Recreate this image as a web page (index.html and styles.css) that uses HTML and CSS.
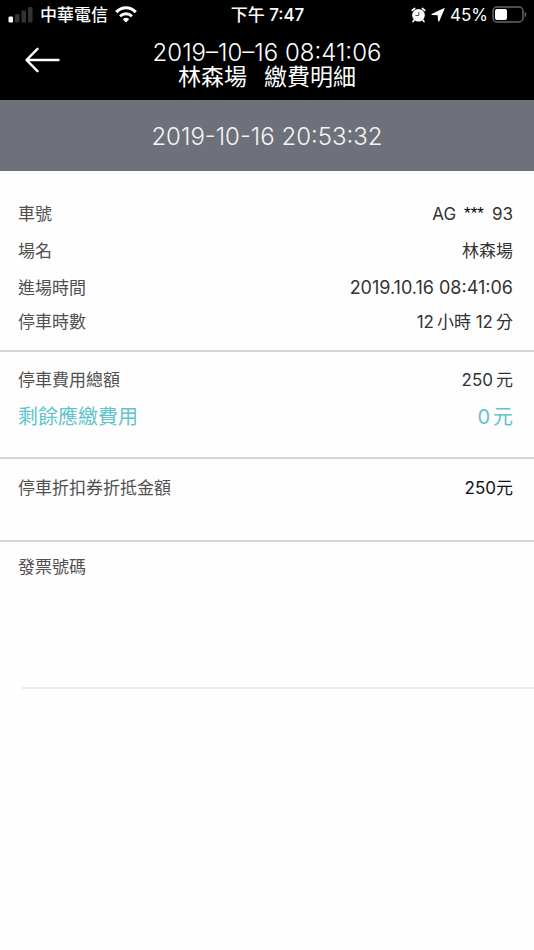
FILE: index.html
```html
<!DOCTYPE html>
<html lang="zh-Hant">
<head>
<meta charset="utf-8">
<meta name="viewport" content="width=device-width, initial-scale=1">
<title>繳費明細</title>
<link rel="stylesheet" href="styles.css">
</head>
<body>
<header class="top">
  <div class="status">
    <div class="status-left">
      <svg class="signal" width="25" height="16" viewBox="0 0 25 16" aria-hidden="true">
        <rect x="0.5" y="9.5" width="4.5" height="6" rx="1.3" fill="#fff"/>
        <rect x="7" y="7" width="4.5" height="8.5" rx="1.2" fill="#333"/>
        <rect x="13.5" y="3.5" width="4.5" height="12" rx="1.2" fill="#333"/>
        <rect x="20" y="0" width="4.5" height="15.5" rx="1.2" fill="#333"/>
      </svg>
      <span class="carrier">中華電信</span>
      <svg width="22" height="17" viewBox="0 0 22 17" fill="none" stroke="#fff" aria-hidden="true">
        <path d="M1.2 6.1C6.8.4 15.2.4 20.8 6.1" stroke-width="3"/>
        <path d="M5 10.2C8.5 6.9 13.5 6.9 17 10.2" stroke-width="2.8"/>
        <path d="M11 16.5L7.8 13.2Q11 10.4 14.2 13.2Z" fill="#fff" stroke="none"/>
      </svg>
    </div>
    <time class="clock">下午 7:47</time>
    <div class="status-right">
      <svg width="15" height="16" viewBox="0 0 15 16" aria-hidden="true">
        <circle cx="7.5" cy="8.2" r="6.3" fill="#fff"/>
        <path d="M1.3 3.4L3.6 1.5M13.7 3.4L11.4 1.5" stroke="#fff" stroke-width="1.8" stroke-linecap="round"/>
        <path d="M3.2 13L2 14.6M11.8 13L13 14.6" stroke="#fff" stroke-width="1.6" stroke-linecap="round"/>
        <path d="M7.8 4.8V8.5H4.3" fill="none" stroke="#444" stroke-width="0.9"/>
      </svg>
      <svg class="location" width="14" height="14" viewBox="0 0 14 14" aria-hidden="true">
        <path d="M13.7 .6L8.3 13.2Q7.3 14 7 12.8L6.7 7.3L1 7Q-.2 6.5 1 5.7L12.8 .2Q13.9 -.1 13.7 .6Z" fill="#fff"/>
      </svg>
      <span class="percent">45%</span>
      <svg width="35" height="17" viewBox="0 0 35 17" aria-hidden="true">
        <rect x="1" y="1" width="30" height="15" rx="4" fill="none" stroke="#666" stroke-width="1.5"/>
        <rect x="3" y="3" width="12" height="11" rx="2" fill="#fff"/>
        <path d="M32.7 5.5Q36 8.5 32.7 11.5Z" fill="#666"/>
      </svg>
    </div>
  </div>
  <div class="nav">
    <button class="back" type="button" aria-label="返回">
      <svg width="35" height="26" viewBox="0 0 35 26" fill="none" stroke="#fff" stroke-width="2.4" stroke-linecap="round" stroke-linejoin="round" aria-hidden="true">
        <path d="M33.5 13H2M12.5 1.8L1.5 13L12.5 24.2"/>
      </svg>
    </button>
    <h1 class="title"><span class="title-date">2019–10–16 08:41:06</span><span class="title-name"><span>林森場</span><span>繳費明細</span></span></h1>
  </div>
</header>
<div class="banner"><time>2019-10-16 20:53:32</time></div>
<main>
  <dl class="section parking">
    <div class="row"><dt>車號</dt><dd class="plate"><span>AG</span><span class="mask">***</span><span>93</span></dd></div>
    <div class="row"><dt>場名</dt><dd>林森場</dd></div>
    <div class="row"><dt>進場時間</dt><dd class="entry">2019.10.16 08:41:06</dd></div>
    <div class="row compact"><dt>停車時數</dt><dd>12<span class="unit">小時</span> 12<span class="unit">分</span></dd></div>
  </dl>
  <dl class="section fees">
    <div class="row compact"><dt>停車費用總額</dt><dd>250<span class="unit">元</span></dd></div>
    <div class="row due"><dt>剩餘應繳費用</dt><dd>0<span class="unit">元</span></dd></div>
  </dl>
  <dl class="section discount">
    <div class="row compact"><dt>停車折扣券折抵金額</dt><dd class="strong">250元</dd></div>
  </dl>
  <section class="invoice">
    <h2>發票號碼</h2>
  </section>
  <hr class="end">
</main>
</body>
</html>
```

FILE: styles.css
```css
* { box-sizing: border-box; }
body {
  margin: 0;
  background: #fefefe;
  color: #333;
  font-family: Inter, "Noto Sans CJK TC", sans-serif;
  font-size: 17px;
}
h1, h2, dl, dd { margin: 0; font-weight: 400; }
svg { display: block; flex: none; }

.top { background: #000; color: #fff; }
.status {
  display: grid;
  grid-template-columns: 1fr auto 1fr;
  align-items: center;
  height: 29px;
  padding: 0 7px 0 8px;
  line-height: 24px;
}
.status-left, .status-right { display: flex; align-items: center; }
.status-left { gap: 7px; }
.status-right { justify-content: flex-end; gap: 4px; }
.carrier, .clock { font-weight: 500; }
.location { margin: 0 1px; }

.nav {
  display: grid;
  grid-template-columns: 72px 1fr 72px;
  height: 71px;
  padding-top: 12px;
}
.back {
  align-self: start;
  justify-self: end;
  margin: 0 12px 0 0;
  padding: 6px 0;
  border: 0;
  background: none;
}
.title { font-size: 23px; line-height: 24px; text-align: center; }
.title-date { display: block; font-size: 24px; font-weight: 300; }
.title-name { display: flex; justify-content: center; gap: 17px; }

.banner {
  display: flex;
  align-items: center;
  justify-content: center;
  height: 71px;
  padding-top: 2px;
  background: #6e7179;
  color: #f4f4f8;
  font-size: 24px;
  font-weight: 300;
}

.section { padding: 0 21px 0 18px; border-bottom: 2px solid #d5d5d5; }
.row {
  display: flex;
  align-items: center;
  justify-content: space-between;
  height: 37px;
  line-height: 24px;
}
.compact { height: 32px; }
dt { color: #505050; }
.plate { display: flex; gap: 8px; }
.mask { font-family: "Liberation Sans", sans-serif; color: #000; }
.entry { font-size: 18px; }
.unit { margin-left: 3px; }
.parking { padding-top: 24px; padding-bottom: 12px; }
.fees { padding-top: 12px; padding-bottom: 20px; }
.due { height: 41px; }
.due, .due dt { color: #5fc4cd; font-size: 20px; }
.strong { color: #111; }
.discount { padding-top: 13px; padding-bottom: 36px; }

.invoice { padding: 13px 18px; height: 145px; }
.invoice h2 { font-size: 17px; line-height: 24px; color: #505050; }
.end { margin: 0 0 0 22px; border: 0; border-top: 2px solid #ebebeb; }
```
